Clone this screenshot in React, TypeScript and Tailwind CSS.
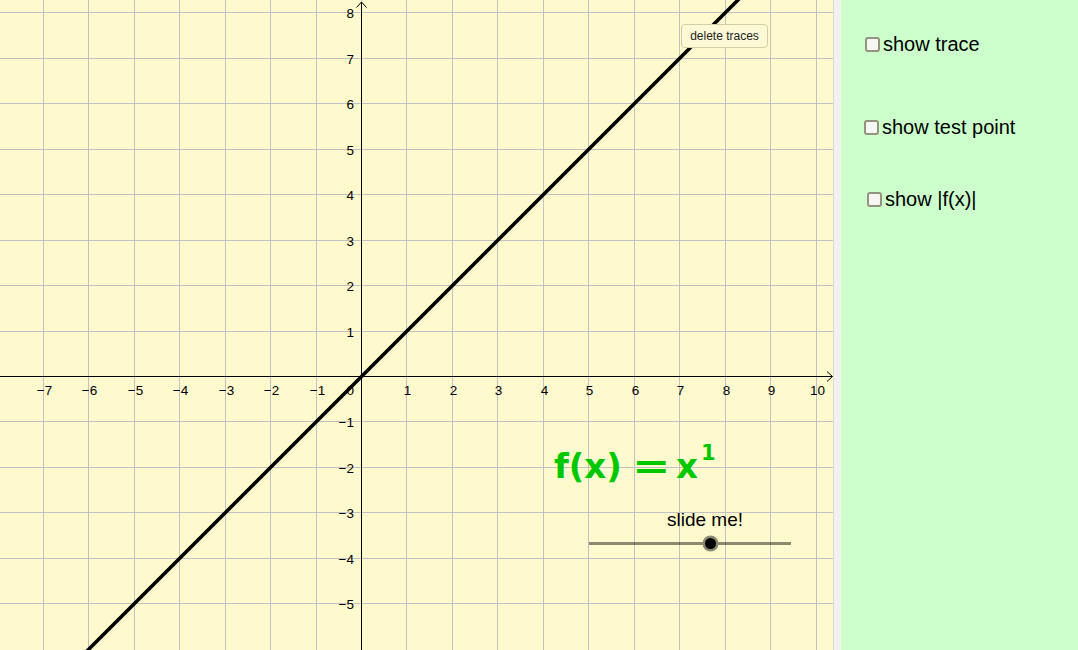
import React from 'react'

const UNIT = 45.45
const OX = 361
const OY = 376
const W = 833
const H = 650

const gx = (v: number) => Math.round(OX + v * UNIT) + 0.5
const gy = (v: number) => Math.round(OY - v * UNIT) + 0.5

const XS = Array.from({ length: 18 }, (_, i) => i - 7) // -7..10
const YS = Array.from({ length: 14 }, (_, i) => i - 5) // -5..8

const label = (n: number) => (n < 0 ? `\u2212${-n}` : `${n}`)

function Graph() {
  return (
    <svg width={W} height={H} className="block font-['Liberation_Sans',Arial,sans-serif]">
      {/* grid */}
      {XS.map((i) => (
        <line key={`vx${i}`} x1={gx(i)} x2={gx(i)} y1={0} y2={H} stroke="#c2c2c6" strokeWidth={1} />
      ))}
      {YS.map((j) => (
        <line key={`hy${j}`} x1={0} x2={W} y1={gy(j)} y2={gy(j)} stroke="#c2c2c6" strokeWidth={1} />
      ))}

      {/* axes */}
      <line x1={0} x2={832} y1={gy(0)} y2={gy(0)} stroke="#000" strokeWidth={1} />
      <polyline points={`827,${gy(0) - 5} 832.5,${gy(0)} 827,${gy(0) + 5}`} fill="none" stroke="#000" strokeWidth={1} />
      <line x1={gx(0)} x2={gx(0)} y1={2} y2={H} stroke="#000" strokeWidth={1} />
      <polyline points={`${gx(0) - 5},7.5 ${gx(0)},2 ${gx(0) + 5},7.5`} fill="none" stroke="#000" strokeWidth={1} />

      {/* tick labels */}
      {XS.filter((i) => i !== 0).map((i) => (
        <text key={`lx${i}`} x={gx(i) + 1} y={395} textAnchor="middle" fontSize={13.5} fill="#000">
          {label(i)}
        </text>
      ))}
      <text x={354} y={395} textAnchor="end" fontSize={13.5} fill="#000">0</text>
      {YS.filter((j) => j !== 0).map((j) => (
        <text key={`ly${j}`} x={354} y={gy(j) + 5} textAnchor="end" fontSize={13.5} fill="#000">
          {label(j)}
        </text>
      ))}

      {/* f(x) = x */}
      <line
        x1={OX + 0.5 - 7 * UNIT}
        y1={OY + 0.5 + 7 * UNIT}
        x2={OX + 0.5 + 9 * UNIT}
        y2={OY + 0.5 - 9 * UNIT}
        stroke="#000"
        strokeWidth={3.5}
      />

      {/* formula */}
      <g className="font-['DejaVu_Sans',sans-serif]" fontWeight="bold" fill="#00c800">
        <text x={554} y={478} fontSize={34}>f(x)</text>
        <text x={0} y={0} fontSize={34} transform="translate(632 478) scale(1.35 1)">=</text>
        <text x={676} y={478} fontSize={34}>x</text>
        <text x={701} y={460} fontSize={21}>1</text>
      </g>

      {/* slider */}
      <text x={667} y={526} fontSize={19} fill="#000">slide me!</text>
      <line x1={589} x2={791} y1={543.5} y2={543.5} stroke="rgba(0,0,0,0.45)" strokeWidth={3} />
      <circle cx={710.5} cy={543.5} r={8} fill="#8a8872" />
      <circle cx={710.5} cy={543.5} r={5.5} fill="#000" />
    </svg>
  )
}

function Check({ text, className }: { text: string; className: string }) {
  return (
    <label className={`flex items-center gap-[3px] h-[24px] text-[20px] leading-[24px] text-black ${className}`}>
      <input
        type="checkbox"
        className="appearance-none w-[15px] h-[15px] shrink-0 rounded-[3px] border-2 border-[#93937f] bg-[#f6f6f2]"
      />
      <span>{text}</span>
    </label>
  )
}

export default function App() {
  return (
    <div className="flex w-[1078px] h-[650px] overflow-hidden font-['Liberation_Sans',Arial,sans-serif]">
      <div className="relative w-[833px] h-[650px] shrink-0 bg-[#fffacd]">
        <Graph />
        <button className="absolute left-[681px] top-[24px] w-[87px] h-[24px] rounded-[4px] border border-[#d2cfa4] bg-[#fdf9d6] text-[12px] leading-none text-[#222]">
          delete traces
        </button>
      </div>
      <div className="w-[8px] shrink-0 bg-[#f1f1f1] border-l border-[#dadada]" />
      <div className="flex-1 flex flex-col pt-[32px] bg-[#ccffcc]">
        <Check text="show trace" className="ml-[24px]" />
        <Check text="show test point" className="ml-[23px] mt-[59px]" />
        <Check text="show |f(x)|" className="ml-[26px] mt-[48px]" />
      </div>
    </div>
  )
}
